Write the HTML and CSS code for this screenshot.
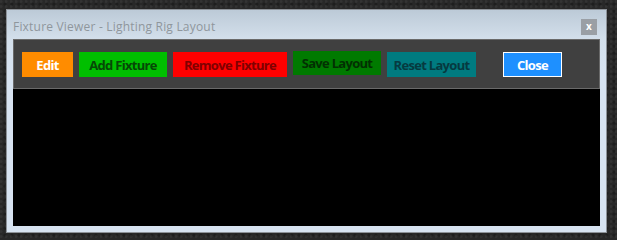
FILE: index.html
```
<!DOCTYPE html>
<html>
<head>
<meta charset="utf-8">
<link rel="stylesheet" href="styles.css">
</head>
<body>
<div class="window">
  <div class="titlebar">
    <span class="title">Fixture Viewer - Lighting Rig Layout</span>
    <span class="xbtn">x</span>
  </div>
  <div class="toolbar">
    <button class="btn edit">Edit</button>
    <button class="btn add">Add Fixture</button>
    <button class="btn remove">Remove Fixture</button>
    <button class="btn save">Save Layout</button>
    <button class="btn reset">Reset Layout</button>
    <button class="btn close">Close</button>
  </div>
  <div class="canvas"></div>
</div>
</body>
</html>
```
FILE: styles.css
```
html, body {
  margin: 0;
  padding: 0;
}
body {
  width: 617px;
  height: 240px;
  overflow: hidden;
  background-color: #282828;
  background-image:
    radial-gradient(circle at 20% 30%, rgba(255,255,255,0.05) 0 1px, transparent 2px),
    radial-gradient(circle at 70% 60%, rgba(0,0,0,0.25) 0 1px, transparent 2px);
  background-size: 5px 5px, 7px 7px;
  font-family: "Open Sans", "Noto Sans", sans-serif;
}
.window {
  margin: 9px 0 0 6px;
  width: 601px;
  height: 224px;
  box-sizing: border-box;
  border: 1px solid #8d9298;
  background: linear-gradient(#bccad7 0px, #d3dfeb 29px, #d7e3f1 60px, #d7e3f1);
  padding: 0 6px 6px 6px;
  display: flex;
  flex-direction: column;
}
.titlebar {
  height: 29px;
  display: flex;
  align-items: flex-end;
  justify-content: space-between;
  padding: 0 3px 4px 0;
  box-sizing: border-box;
}
.title {
  font-size: 12px;
  color: #8f969c;
  line-height: 16px;
  letter-spacing: 0.2px;
}
.xbtn {
  width: 16px;
  height: 16px;
  background: #9a9fa5;
  color: #ffffff;
  font-size: 10px;
  font-weight: 700;
  line-height: 14px;
  text-align: center;
}
.toolbar {
  height: 50px;
  box-sizing: border-box;
  background: #404040;
  border: 1px solid #6a6a6a;
  display: flex;
  align-items: flex-start;
  gap: 6px;
  padding: 12px 0 0 8px;
}
.btn {
  height: 25px;
  border: none;
  padding: 0;
  margin: 0;
  font-family: "Open Sans", "Noto Sans", sans-serif;
  font-size: 13px;
  font-weight: 700;
  letter-spacing: -0.7px;
  text-align: center;
  cursor: pointer;
}
.edit { width: 51px; background: #ff8c00; color: #ffffff; }
.add { width: 88px; background: #00bf00; color: #064806; }
.remove { width: 114px; background: #ff0000; color: #800000; }
.save { width: 88px; background: #007a00; color: #023002; height: 24px; margin-top: -1px; }
.reset { width: 89px; background: #007b80; color: #063a40; }
.close {
  width: 59px;
  background: #1e90ff;
  color: #ffffff;
  border: 1px solid #ffffff;
  margin-left: 21px;
  box-sizing: border-box;
}
.canvas {
  flex: 1;
  background: #000000;
}
```
